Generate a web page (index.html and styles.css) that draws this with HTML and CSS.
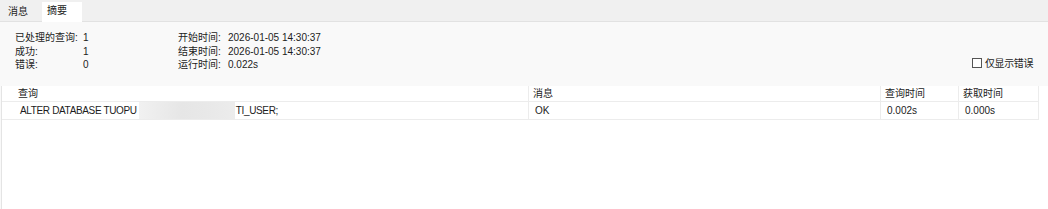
FILE: index.html
```html
<!DOCTYPE html>
<html lang="zh">
<head>
<meta charset="utf-8">
<title>摘要</title>
<link rel="stylesheet" href="styles.css">
</head>
<body>
<div class="tabbar">
  <div class="tab">消息</div>
  <div class="tab active">摘要</div>
</div>
<div class="summary">
  <div class="stats">
    <div>已处理的查询:</div><div>1</div><div>开始时间:</div><div>2026-01-05 14:30:37</div>
    <div>成功:</div><div>1</div><div>结束时间:</div><div>2026-01-05 14:30:37</div>
    <div>错误:</div><div>0</div><div>运行时间:</div><div>0.022s</div>
  </div>
  <label class="only-errors"><span class="box"></span><span class="lbl">仅显示错误</span></label>
</div>
<div class="table">
  <div class="row head">
    <div class="cell c1">查询</div>
    <div class="cell">消息</div>
    <div class="cell">查询时间</div>
    <div class="cell last">获取时间</div>
  </div>
  <div class="row data">
    <div class="cell c1 query"><span class="q">ALTER DATABASE TUOPU</span><span class="blur"></span><span class="q">TI_USER;</span></div>
    <div class="cell">OK</div>
    <div class="cell">0.002s</div>
    <div class="cell last">0.000s</div>
  </div>
</div>
</body>
</html>
```
FILE: styles.css
```css
html, body {
  margin: 0;
  padding: 0;
  height: 100%;
}
body {
  background: #f9f9f9;
  color: #1c1c1c;
  font-family: "Liberation Sans", "Noto Sans CJK SC", sans-serif;
  font-size: 10px;
  overflow: hidden;
  display: flex;
  flex-direction: column;
}
.tabbar {
  height: 21px;
  background: #f0f0f0;
  border-bottom: 1px solid #e2e2e2;
  display: flex;
  align-items: flex-end;
  padding-left: 8px;
}
.tab {
  height: 19px;
  line-height: 18px;
  margin-bottom: -1px;
}
.tab:first-child {
  width: 34px;
}
.tab.active {
  background: #ffffff;
  width: 40px;
  padding-left: 5px;
  box-sizing: border-box;
  height: 20px;
}
.summary {
  display: flex;
  justify-content: space-between;
  padding: 9px 15px 0 15px;
}
.stats {
  display: grid;
  grid-template-columns: 68px 95px 50px auto;
  line-height: 13.5px;
}
.only-errors {
  align-self: flex-end;
  display: flex;
  align-items: center;
  line-height: 13px;
  margin-bottom: 2px;
}
.lbl {
  letter-spacing: -0.4px;
}
.box {
  width: 8px;
  height: 8px;
  border: 1px solid #555;
  background: #fff;
  margin-right: 3px;
}
.table {
  flex: 1;
  margin-top: 14px;
  margin-left: 1px;
  background: #ffffff;
  border-left: 1px solid #e4e4e4;
}
.row {
  display: grid;
  grid-template-columns: 526px 352px 78px 81px;
  border-bottom: 1px solid #ececec;
  width: 1037px;
}
.row.head {
  height: 15px;
  line-height: 15px;
}
.row.data {
  height: 17px;
  line-height: 17px;
}
.cell {
  padding-left: 4px;
  border-left: 1px solid #ececec;
  white-space: nowrap;
  overflow: hidden;
}
.row.data .cell {
  padding-left: 6px;
}
.cell.c1 {
  border-left: none;
  padding-left: 16px;
}
.row.data .cell.c1 {
  padding-left: 18px;
}
.cell.last {
  border-right: 1px solid #ececec;
}
.query {
  display: flex;
  align-items: center;
}
.q {
  letter-spacing: -0.35px;
}
.blur {
  width: 96px;
  height: 18px;
  margin-top: 1px;
  background: linear-gradient(90deg, #f1f1f1 0%, #ececec 20%, #e6e6e6 45%, #e8e8e8 70%, #ececec 100%);
  margin-left: 2px;
  margin-right: 1px;
}
```
